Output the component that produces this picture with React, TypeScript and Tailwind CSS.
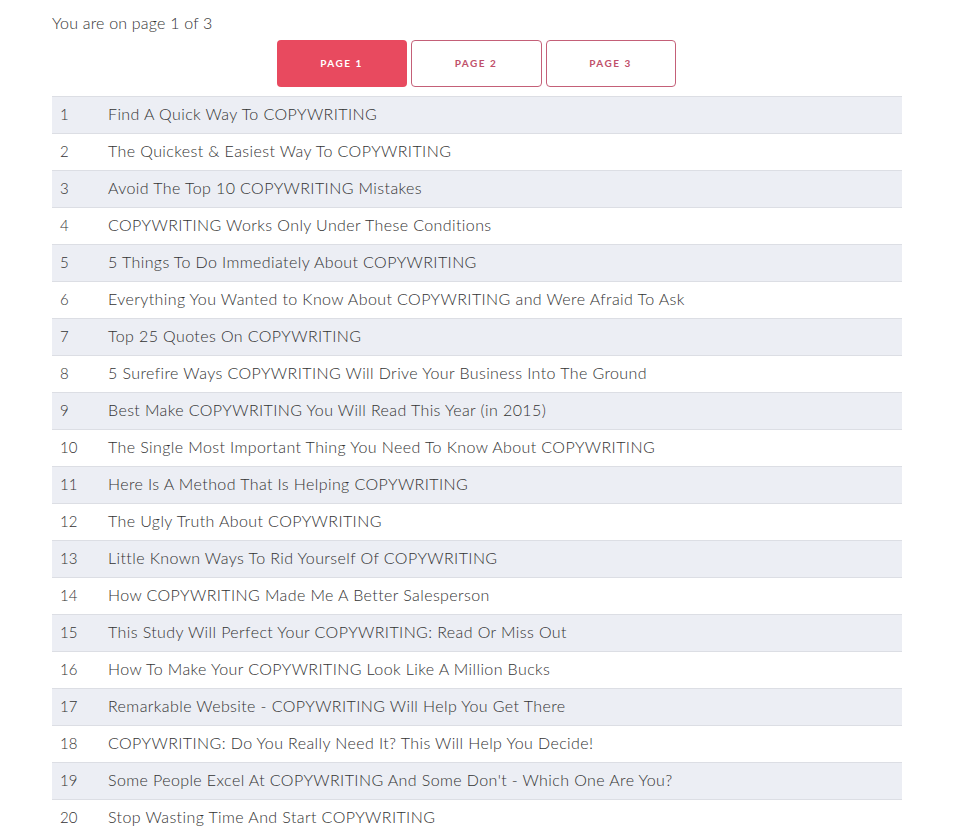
import React from "react";

const titles = [
  "Find A Quick Way To COPYWRITING",
  "The Quickest & Easiest Way To COPYWRITING",
  "Avoid The Top 10 COPYWRITING Mistakes",
  "COPYWRITING Works Only Under These Conditions",
  "5 Things To Do Immediately About COPYWRITING",
  "Everything You Wanted to Know About COPYWRITING and Were Afraid To Ask",
  "Top 25 Quotes On COPYWRITING",
  "5 Surefire Ways COPYWRITING Will Drive Your Business Into The Ground",
  "Best Make COPYWRITING You Will Read This Year (in 2015)",
  "The Single Most Important Thing You Need To Know About COPYWRITING",
  "Here Is A Method That Is Helping COPYWRITING",
  "The Ugly Truth About COPYWRITING",
  "Little Known Ways To Rid Yourself Of COPYWRITING",
  "How COPYWRITING Made Me A Better Salesperson",
  "This Study Will Perfect Your COPYWRITING: Read Or Miss Out",
  "How To Make Your COPYWRITING Look Like A Million Bucks",
  "Remarkable Website - COPYWRITING Will Help You Get There",
  "COPYWRITING: Do You Really Need It? This Will Help You Decide!",
  "Some People Excel At COPYWRITING And Some Don't - Which One Are You?",
  "Stop Wasting Time And Start COPYWRITING",
];

export default function App() {
  return (
    <div
      className="bg-white min-h-[834px] pl-[52px] pt-[12px] text-[#333]"
      style={{ fontFamily: "Lato, 'Open Sans', sans-serif" }}
    >
      <div className="w-[850px]">
        <p className="text-[16px] font-light leading-[22px] tracking-[0.2px] text-[#333]">
          You are on page 1 of 3
        </p>
        <div className="flex justify-center gap-[4px] mt-[6px] mb-[9px] pr-[2px]">
          <button className="w-[130px] h-[47px] rounded-[4px] bg-[#e84a5f] text-white text-[10px] font-bold tracking-[1.5px]">
            PAGE 1
          </button>
          <button className="w-[131px] h-[47px] rounded-[4px] border border-[#c46078] bg-white text-[#c0506a] text-[10px] font-bold tracking-[1.5px]">
            PAGE 2
          </button>
          <button className="w-[130px] h-[47px] rounded-[4px] border border-[#c46078] bg-white text-[#c0506a] text-[10px] font-bold tracking-[1.5px]">
            PAGE 3
          </button>
        </div>
        <div className="flex flex-col">
          {titles.map((t, i) => (
            <div
              key={i}
              className={`flex items-center h-[37px] pb-[2px] border-t border-[#dcdee4] ${
                i % 2 === 0 ? "bg-[#eceef4]" : "bg-white"
              }`}
            >
              <span className="w-[56px] pl-[8px] text-[15px] font-light">{i + 1}</span>
              <span className="text-[16px] font-light tracking-[0.4px]">{t}</span>
            </div>
          ))}
        </div>
      </div>
    </div>
  );
}
